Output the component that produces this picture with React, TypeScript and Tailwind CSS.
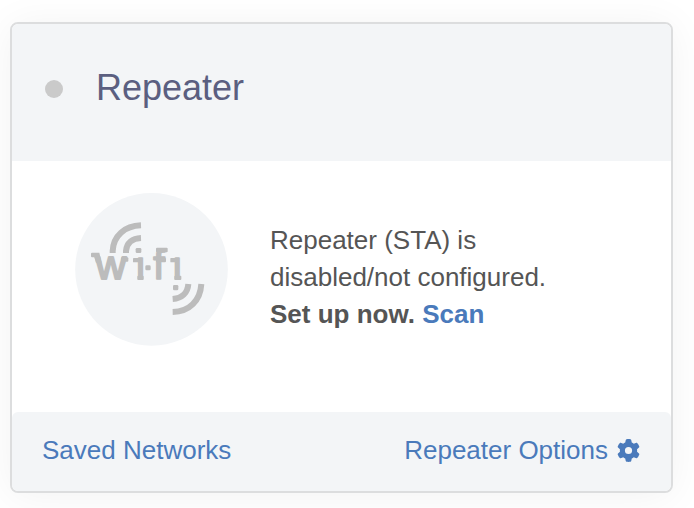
import { FaGear } from "react-icons/fa6";

function WifiBadge() {
  return (
    <svg className="block h-[153px] w-[153px] shrink-0" viewBox="15 23 459 459" role="img" aria-label="wi-fi">
      <circle cx="244.500" cy="252" r="229" fill="#f3f5f7" />
      <g fill="none" stroke="#bcbcbc" strokeWidth="18" strokeLinejoin="round">
        <path d="M128 203V197C130 151 164 122 213 120" />
        <path d="M168 203V197C170 173 187 159 213 158" />
        <path d="M308 380C358 379 391 346 394 296" />
        <path d="M308 341C336 339 353 323 355 296" />
      </g>
      <g fill="#bcbcbc" stroke="#bcbcbc" strokeLinejoin="round" fontFamily="'Liberation Sans', Arial, sans-serif">
        <text x="77" y="282" fontSize="122" strokeWidth="6" textLength="91" lengthAdjust="spacingAndGlyphs">w</text>
        <text x="194.700" y="282" fontSize="119" strokeWidth="5">ı</text>
        <text x="249.500" y="282" fontSize="123" strokeWidth="5">f</text>
        <text x="305.200" y="282" fontSize="119" strokeWidth="5">ı</text>
      </g>
      <g fill="#bcbcbc">
        <path d="M66 202H88L95 232H78L73 216H66Q63 216 63 213V205Q63 202 66 202Z" />
        <rect x="153" y="216" width="22" height="13" rx="3" />
        <rect x="189" y="218" width="20" height="13" rx="2" />
        <rect x="202" y="271" width="19" height="13" rx="3" />
        <rect x="197" y="188" width="17" height="15" rx="4" />
        <rect x="226" y="240" width="16" height="15" rx="4" />
        <rect x="258" y="187" width="35" height="14" rx="3" />
        <rect x="258" y="218" width="30" height="13" rx="3" />
        <rect x="301" y="218" width="20" height="13" rx="2" />
        <rect x="313" y="271" width="21" height="13" rx="3" />
        <rect x="309" y="299" width="16" height="16" rx="4" />
      </g>
    </svg>
  );
}

export default function App() {
  return (
    <div className="h-[508px] w-[694px] overflow-hidden bg-white px-[10px] pt-[22px] font-['Liberation_Sans',Arial,sans-serif] text-[26px] leading-[37px] text-[#555]">
      <section className="flex h-[471px] w-[663px] flex-col overflow-hidden rounded-[8px] border-2 border-[#dcddde] bg-white shadow-[0_3px_40px_rgba(0,0,0,0.055)]">
        <header className="flex h-[137px] shrink-0 items-center bg-[#f3f5f7] pb-[8px] pl-[33px]">
          <span className="h-[18px] w-[18px] rounded-full bg-[#cacaca]" />
          <h2 className="-mt-[2px] ml-[33px] text-[36px] leading-[44px] text-[#5b5f80]">Repeater</h2>
        </header>
        <div className="flex flex-1 items-start pt-[32px] pl-[63px]">
          <WifiBadge />
          <p className="mt-[29px] ml-[42px] whitespace-nowrap">
            Repeater (STA) is<br />
            disabled/not configured.<br />
            <b>Set up now. <a className="text-[#4a7abb]">Scan</a></b>
          </p>
        </div>
        <footer className="flex h-[79px] shrink-0 items-center justify-between rounded-t-[6px] bg-[#f3f5f7] pr-[31px] pb-[2px] pl-[30px] text-[#4a7abb]">
          <a>Saved Networks</a>
          <a className="flex items-center gap-[9px]">Repeater Options <FaGear className="h-[23px] w-[23px]" /></a>
        </footer>
      </section>
    </div>
  );
}
